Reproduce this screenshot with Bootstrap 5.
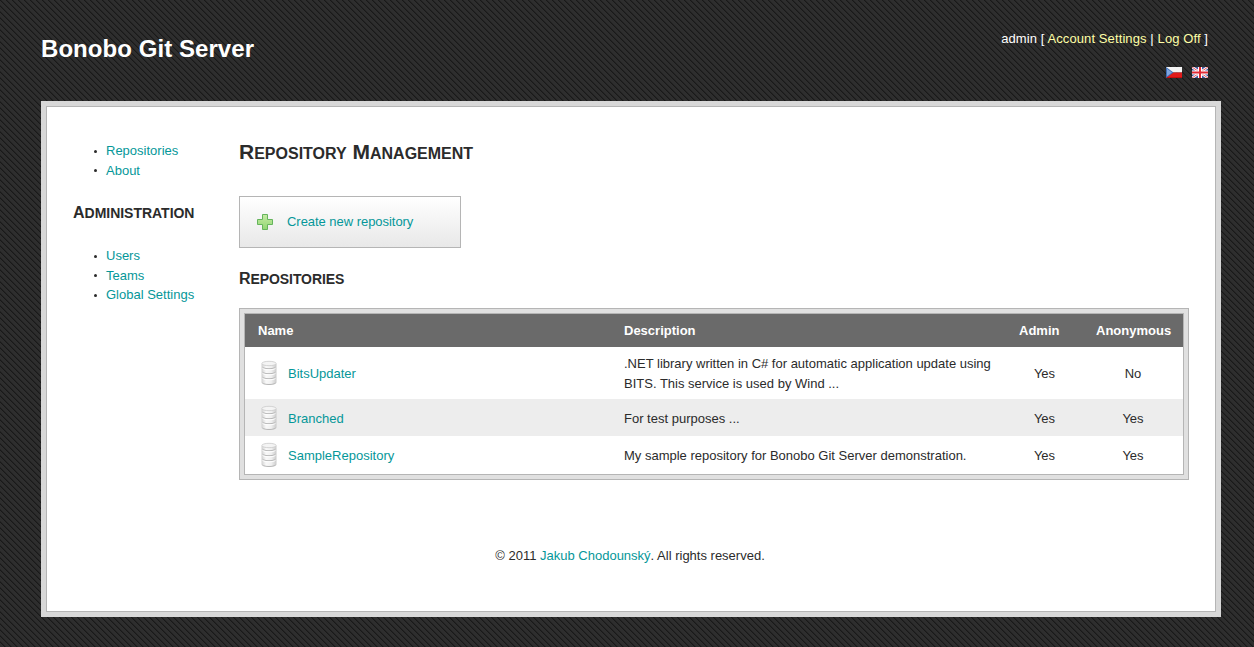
<!DOCTYPE html>
<html lang="en">
<head>
<meta charset="utf-8">
<title>Bonobo Git Server</title>
<link rel="stylesheet" href="https://cdn.jsdelivr.net/npm/bootstrap@5.3.0/dist/css/bootstrap.min.css">
<style>
body{font-family:"Liberation Sans",Arial,sans-serif;font-size:13px;line-height:19.5px;color:#2b2b2b;min-height:647px;
background:#2e2e2e url("data:image/svg+xml,%3Csvg xmlns='http://www.w3.org/2000/svg' width='6' height='6' shape-rendering='crispEdges'%3E%3Cpath fill='%23191919' d='M0 0h1v1H0zM1 1h1v1H1zM2 2h1v1H2zM3 3h1v1H3zM4 4h1v1H4zM5 5h1v1H5z'/%3E%3Cpath fill='%23242424' d='M1 0h1v1H1zM2 1h1v1H2zM3 2h1v1H3zM4 3h1v1H4zM5 4h1v1H5zM0 5h1v1H0z'/%3E%3C/svg%3E")}
a{color:#059799;text-decoration:none}
.page-wrap{width:1180px;margin-left:41px}
.site-head{height:101px}
.site-title{font-size:24px;line-height:30px;font-weight:bold;color:#fff;margin:34px 0 0;letter-spacing:.06px}
.account{color:#fff;padding:29px 13px 0 0}
.account-line{letter-spacing:.1px;margin-right:-.1px}
.account a{color:#ffffa6}
.flags{gap:10px;margin-top:18px}
.flags svg,.add-box svg,.repo-table svg{display:block}
.frame{border:5px solid #d8d8d8;height:516px}
.frame-inner{border:1px solid #b5b5b5;background:#fff;height:506px;padding:34px 26px 0}
.side{width:166px;flex:none}
.side ul{list-style:none;padding:0;margin:0 0 0 33px}
.side li{position:relative;height:19.5px}
.side li::before{content:"";position:absolute;left:-12px;top:8.5px;width:3px;height:3px;border-radius:50%;background:#2b2b2b}
h1,h2,h3{font-weight:bold;margin:0}
.caps{text-transform:uppercase}
.caps::first-letter{font-size:16px}
.page-title{font-size:21px;line-height:24px;height:24px;margin-top:-1px}
.page-title .lower{font-size:16px;text-transform:uppercase}
.caps{font-size:14px;line-height:20px}
.admin-head{margin:23px 0 23px;letter-spacing:-.02px}
.repo-head{margin-top:21px;height:20px;letter-spacing:-.08px}
.add-box{width:222px;height:52px;border:1px solid #b5b5b5;background:linear-gradient(#fff,#e8e8e8);padding-left:17px;gap:14px;margin-top:32px}
.add-box a{letter-spacing:-.04px}
.table-frame{width:950px;border:1px solid #b5b5b5;background:#e0e0e0;padding:4px;margin-top:19px}
.table-edge{border:1px solid #b5b5b5;background:#fff}
.repo-table{width:938px;table-layout:fixed;border-collapse:collapse}
.repo-table th{background:#6a6a6a;color:#fff;height:33px;padding:0 0 0 13px;text-align:left}
.repo-table td{padding:1px 0 0 13px;vertical-align:middle}
.repo-table td.flag{padding:1px 0 0;text-align:center}
.repo-table td:first-child{padding-top:0}
.repo-table tr.alt{background:#ededed}
.repo-table .r2 td{padding-top:2px}
.repo-table .r2 td:first-child{padding-top:1px}
.r1{height:52px}.r2{height:37px}.r3{height:38px}
.repo-name{gap:9px;padding-left:1px}
.repo-name a{padding-top:1px}
.repo-table .r1 td{line-height:20px}
.foot{text-align:center;margin-top:66px;padding-right:2px}
</style>
</head>
<body>
<svg width="0" height="0" class="position-absolute" aria-hidden="true">
<defs>
<linearGradient id="metal"><stop offset="0" stop-color="#d0d0d0"/><stop offset=".3" stop-color="#f9f9f9"/><stop offset=".65" stop-color="#f0f0f0"/><stop offset="1" stop-color="#cacaca"/></linearGradient>
<symbol id="db" viewBox="0 0 20 26">
<path d="M2.500 4v18.500c0 3.200 15 3.200 15 0V4z" fill="url(#metal)"/>
<ellipse cx="10" cy="3.500" rx="7.200" ry="2.200" fill="#f4f4f4" stroke="#cacaca" stroke-width=".8"/>
<g fill="none" stroke="#b0b0b0" stroke-width=".9"><path d="M3.500 7.200c2 2 11 2 13 0M3.500 12.200c2 2 11 2 13 0M3.500 17.200c2 2 11 2 13 0M3.500 23c2 2 11 2 13 0"/></g>
<g fill="none" stroke="#fff" stroke-width="1"><path d="M3.500 8.300c2 2 11 2 13 0M3.500 13.300c2 2 11 2 13 0M3.500 18.300c2 2 11 2 13 0"/></g>
</symbol>
</defs>
</svg>
<div class="page-wrap">
<header class="site-head d-flex justify-content-between">
<div class="site-title">Bonobo Git Server</div>
<div class="account text-end">
<div class="account-line">admin [ <a href="#">Account Settings</a> | <a href="#">Log Off</a> ]</div>
<div class="flags d-flex justify-content-end">
<svg width="16" height="11" viewBox="0 0 16 11"><path fill="#f4f4f4" d="M0 0h16v5.500H0z"/><path fill="#e01b1b" d="M0 5.500h16V11H0z"/><path fill="#c40c0c" d="M0 10h16v1H0z"/><path fill="#3f6fb5" d="M0 0l7.500 5.500L0 11z"/><path fill="#7fa6df" d="M1 1.700l5 3.800L1 9.300z"/></svg>
<svg width="16" height="11" viewBox="0 0 16 11"><path fill="#4358a0" d="M0 0h16v11H0z"/><path d="M0 0l16 11M16 0L0 11" stroke="#fff" stroke-width="2.600"/><path d="M0 0l16 11M16 0L0 11" stroke="#e3464e" stroke-width=".9"/><path d="M8 0v11M0 5.500h16" stroke="#fff" stroke-width="4"/><path d="M8 0v11M0 5.500h16" stroke="#e12a35" stroke-width="2"/></svg>
</div>
</div>
</header>
<div class="frame">
<div class="frame-inner">
<div class="d-flex">
<nav class="side">
<ul><li><a href="#">Repositories</a></li><li><a href="#">About</a></li></ul>
<h3 class="caps admin-head">Administration</h3>
<ul><li><a href="#">Users</a></li><li><a href="#">Teams</a></li><li><a href="#">Global Settings</a></li></ul>
</nav>
<main>
<h1 class="page-title">R<span class="lower">epository</span> M<span class="lower">anagement</span></h1>
<div class="add-box d-flex align-items-center">
<svg width="16" height="16" viewBox="0 0 16 16"><defs><linearGradient id="gr" x2="0" y2="1"><stop stop-color="#c5eba5"/><stop offset="1" stop-color="#91d672"/></linearGradient></defs><path d="M5.500.5h5v5h5v5h-5v5h-5v-5h-5v-5h5z" fill="url(#gr)" stroke="#65b45c"/></svg>
<a href="#">Create new repository</a>
</div>
<h2 class="caps repo-head">Repositories</h2>
<div class="table-frame">
<div class="table-edge">
<table class="repo-table">
<colgroup><col style="width:366px"><col style="width:395px"><col style="width:77px"><col style="width:100px"></colgroup>
<thead><tr><th>Name</th><th>Description</th><th>Admin</th><th>Anonymous</th></tr></thead>
<tbody>
<tr class="r1"><td><div class="repo-name d-flex align-items-center"><svg width="20" height="26"><use href="#db"/></svg><a href="#">BitsUpdater</a></div></td><td>.NET library written in C# for automatic application update using<br>BITS. This service is used by Wind ...</td><td class="flag">Yes</td><td class="flag">No</td></tr>
<tr class="r2 alt"><td><div class="repo-name d-flex align-items-center"><svg width="20" height="26"><use href="#db"/></svg><a href="#">Branched</a></div></td><td>For test purposes ...</td><td class="flag">Yes</td><td class="flag">Yes</td></tr>
<tr class="r3"><td><div class="repo-name d-flex align-items-center"><svg width="20" height="26"><use href="#db"/></svg><a href="#">SampleRepository</a></div></td><td>My sample repository for Bonobo Git Server demonstration.</td><td class="flag">Yes</td><td class="flag">Yes</td></tr>
</tbody>
</table>
</div>
</div>
</main>
</div>
<footer class="foot">© 2011 <a href="#">Jakub Chodounský</a>. All rights reserved.</footer>
</div>
</div>
</div>
<script src="https://cdn.jsdelivr.net/npm/bootstrap@5.3.0/dist/js/bootstrap.bundle.min.js"></script>
</body>
</html>
